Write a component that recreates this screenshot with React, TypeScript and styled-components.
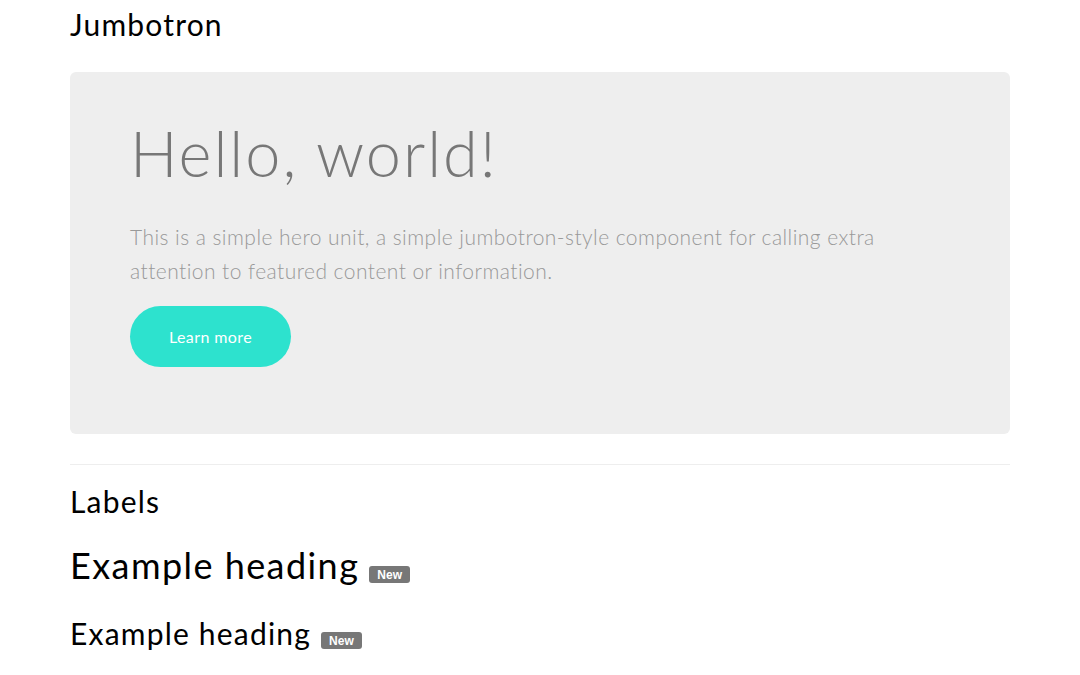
import React from "react";
import styled, { createGlobalStyle } from "styled-components";

const GlobalStyle = createGlobalStyle`
  html, body {
    margin: 0;
    padding: 0;
    background: #ffffff;
  }
  body {
    font-family: Lato, "Open Sans", sans-serif;
    color: #000000;
  }
`;

const App = () => {
  return (
    <>
      <GlobalStyle />
      <Container>
        <SectionTitle>Jumbotron</SectionTitle>
        <Jumbotron>
          <HeroTitle>Hello, world!</HeroTitle>
          <HeroText>
            This is a simple hero unit, a simple jumbotron-style component for calling extra
            attention to featured content or information.
          </HeroText>
          <PillButton type="button">Learn more</PillButton>
        </Jumbotron>
        <Divider />
        <SectionTitle $top={20}>Labels</SectionTitle>
        <Heading $size={36} $top={28}>
          Example heading<Label>New</Label>
        </Heading>
        <Heading $size={30} $top={31}>
          Example heading<Label>New</Label>
        </Heading>
      </Container>
    </>
  );
};

export default App;

const Container = styled.div`
  width: 940px;
  margin: 0 auto;
  padding-bottom: 40px;
`;

const SectionTitle = styled.h2<{ $top?: number }>`
  margin: ${(p) => p.$top ?? 8}px 0 0;
  font-size: 30px;
  line-height: 33px;
  font-weight: 400;
  letter-spacing: 1.2px;
  color: #000;
`;

const Jumbotron = styled.div`
  margin-top: 31px;
  background: #eeeeee;
  border-radius: 6px;
  padding: 46px 60px 67px;
`;

const HeroTitle = styled.h1`
  margin: 0;
  font-size: 63px;
  line-height: 69px;
  font-weight: 300;
  letter-spacing: 2px;
  color: #777777;
`;

const HeroText = styled.p`
  margin: 33px 0 0;
  max-width: 780px;
  font-size: 21px;
  line-height: 34px;
  font-weight: 300;
  letter-spacing: 0.45px;
  color: #999999;
`;

const PillButton = styled.button`
  margin-top: 18px;
  width: 161px;
  height: 61px;
  border: none;
  border-radius: 31px;
  background: #2de2ce;
  color: #ffffff;
  font-family: Lato, "Open Sans", sans-serif;
  font-size: 16px;
  font-weight: 400;
  letter-spacing: 0.4px;
  cursor: pointer;
`;

const Divider = styled.hr`
  margin: 30px 0 0;
  border: 0;
  border-top: 1px solid #eeeeee;
`;

const Heading = styled.h3<{ $size: number; $top: number }>`
  margin: ${(p) => p.$top}px 0 0;
  font-size: ${(p) => p.$size}px;
  line-height: 1.1;
  font-weight: 400;
  letter-spacing: 0.04em;
  color: #000;
`;

const Label = styled.span`
  display: inline-block;
  margin-left: 10px;
  padding: 3px 8px 2px;
  border-radius: 3px;
  background: #777777;
  color: #ffffff;
  font-family: "Liberation Sans", Arial, sans-serif;
  font-size: 12px;
  font-weight: 700;
  line-height: 1;
  letter-spacing: 0;
  vertical-align: baseline;
`;
